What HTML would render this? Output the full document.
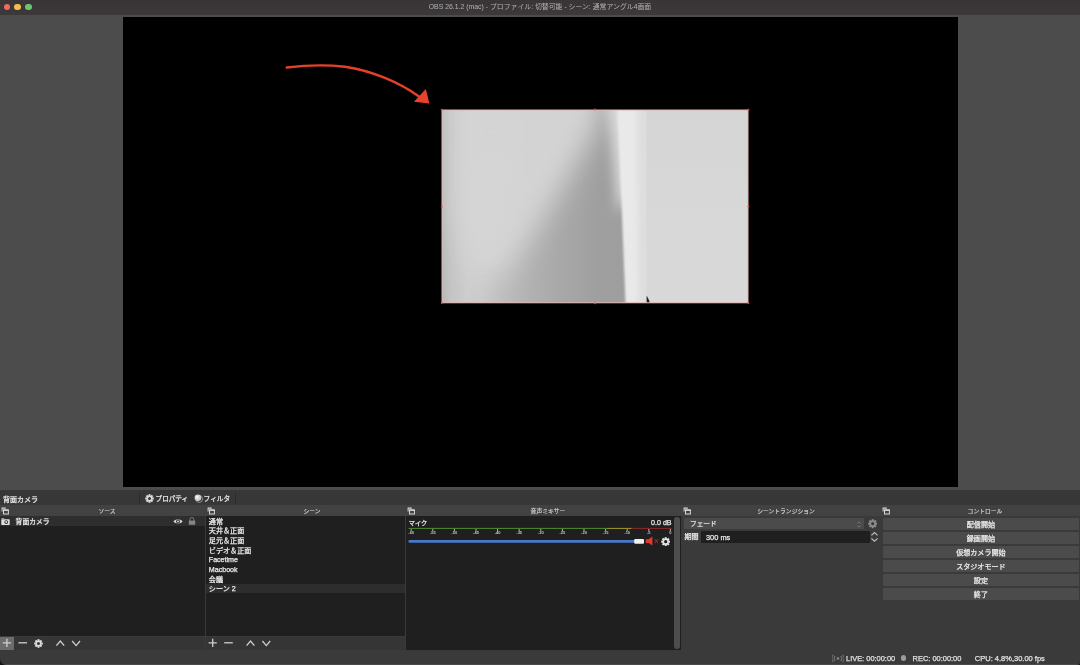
<!DOCTYPE html>
<html lang="ja">
<head>
<meta charset="utf-8">
<title>OBS 26.1.2 (mac)</title>
<style>
*{margin:0;padding:0;box-sizing:border-box}
html,body{width:1080px;height:665px;overflow:hidden;background:#4c4c4c}
body{position:relative;filter:blur(0.4px);font-family:"Liberation Sans","Noto Sans CJK JP",sans-serif;font-size:7px;color:#e6e6e6;line-height:1;-webkit-font-smoothing:antialiased}
.abs{position:absolute}
#titlebar{left:0;top:0;width:1080px;height:14.5px;background:linear-gradient(#393436,#3c393b)}
#title{left:0;width:1080px;top:4.4px;text-align:center;color:#b4b2b3;font-size:6.88px;white-space:nowrap}
.tl{width:6.8px;height:6.8px;border-radius:50%;top:3.6px}
#preview{left:122.5px;top:17px;width:835.3px;height:469.8px;background:#000}
#lower{left:0;top:489.5px;width:1080px;height:175.5px;background:linear-gradient(#373737 0,#373737 15.5px,#3a3a3a 15.5px)}
.hdr{top:505.3px;height:10.7px;background:#424242}
.hdrt{top:508.6px;font-size:5.8px;color:#d4d4d4;-webkit-text-stroke:0.15px #d4d4d4;text-align:center;white-space:nowrap}
.list{background:#1f1f1f}
.tb{background:#353535}
.t{white-space:nowrap;color:#ececec;-webkit-text-stroke:0.25px #ececec}
.sc{left:208.8px;height:9.62px;line-height:9.62px;font-size:7.1px;margin-top:1.5px}
.btn{left:883.2px;width:195.4px;overflow:hidden;height:12.3px;background:#4b4b4b;text-align:center;line-height:14.3px;color:#ececec;font-size:7.05px;-webkit-text-stroke:0.25px #ececec}
</style>
</head>
<body>
<div id="titlebar" class="abs"></div>
<div class="abs tl" style="left:3.5px;background:#ee6a5f"></div>
<div class="abs tl" style="left:14.1px;background:#f5bd4f"></div>
<div class="abs tl" style="left:24.9px;background:#6cc56a"></div>
<div id="title" class="abs">OBS 26.1.2 (mac) - プロファイル: 切替可能 - シーン: 通常アングル4画面</div>

<div id="preview" class="abs"></div>


<!-- source image inside preview -->
<svg class="abs" style="left:0;top:0" width="1080" height="490" viewBox="0 0 1080 490">
  <defs>
    <linearGradient id="gL" x1="0" y1="0" x2="1" y2="0">
      <stop offset="0" stop-color="#b6b6b6"/>
      <stop offset="0.05" stop-color="#c3c3c3"/>
      <stop offset="0.13" stop-color="#cccccc"/>
      <stop offset="0.20" stop-color="#c9c9c9"/>
      <stop offset="0.29" stop-color="#bebebe"/>
      <stop offset="0.43" stop-color="#b1b1b1"/>
      <stop offset="0.57" stop-color="#a8a8a8"/>
      <stop offset="0.76" stop-color="#9f9f9f"/>
      <stop offset="1" stop-color="#9d9d9d"/>
    </linearGradient>
    <linearGradient id="gR" x1="0" y1="0" x2="0" y2="1">
      <stop offset="0" stop-color="#d5d5d5"/>
      <stop offset="1" stop-color="#d9d9d9"/>
    </linearGradient>
    <filter id="bl6" x="-30%" y="-30%" width="160%" height="160%"><feGaussianBlur stdDeviation="6"/></filter>
    <filter id="bl1" x="-30%" y="-30%" width="160%" height="160%"><feGaussianBlur stdDeviation="1.2"/></filter>
    <filter id="bl3" x="-30%" y="-30%" width="160%" height="160%"><feGaussianBlur stdDeviation="3"/></filter>
    <filter id="bl14" x="-40%" y="-40%" width="180%" height="180%"><feGaussianBlur stdDeviation="14"/></filter>
    <filter id="bl10" x="-30%" y="-30%" width="160%" height="160%"><feGaussianBlur stdDeviation="10"/></filter>
    <clipPath id="cpImg"><rect x="442" y="110" width="306" height="193"/></clipPath>
  </defs>
  <g clip-path="url(#cpImg)">
    <rect x="440" y="108" width="210" height="198" fill="url(#gL)"/>
    <!-- light diagonal fold (upper area lighter) -->
    <path d="M452 80 L610 80 L596 130 L552 205 L512 265 L474 290 L452 210 Z" fill="#d5d5d5" filter="url(#bl14)" opacity=".97"/>
    <path d="M466 150 L520 150 L505 230 L470 262 Z" fill="#d5d5d5" filter="url(#bl10)" opacity=".7"/>
    
    <!-- white band -->
    <path d="M606 95 L630 95 L630 190 L618 215 L612 150 Z" fill="#e6e6e6" filter="url(#bl6)" opacity=".8"/>
    <path d="M616.5 95 L650 95 L650 315 L626 315 L622 215 L619 150 Z" fill="#e9e9e9" filter="url(#bl1)"/>
    <path d="M637 100 L650 100 L650 310 L639 310 Z" fill="#dddddd" filter="url(#bl3)"/>
    <rect x="646.4" y="105" width="110" height="205" fill="url(#gR)"/>
    <path d="M646.6 295.4 L646.6 302.8 L649.8 302.8 L649 300 Z" fill="#222"/>
  </g>
  <rect x="442" y="110" width="306" height="192.8" fill="none" stroke="#e2b3b3" stroke-width="1"/>
  <g fill="#d8584a"><circle cx="441.8" cy="109.8" r="1"/><circle cx="595" cy="109.6" r="1"/><circle cx="748.4" cy="109.8" r="1"/><circle cx="441.8" cy="206.5" r="1"/><circle cx="748.4" cy="206.5" r="1"/><circle cx="441.8" cy="303" r="1"/><circle cx="595" cy="303.2" r="1"/><circle cx="748.4" cy="303" r="1"/></g>
  <!-- arrow -->
  <path d="M286.7 67.5 C303 65.5 325 64.5 345 66.7 C372 70.5 400 83 419 96.5" fill="none" stroke="#e5402c" stroke-width="2.4" stroke-linecap="round"/>
  <path d="M425.8 89 L414 101.8 L429.4 103.4 Z" fill="#e9422c"/>
</svg>
<div id="lower" class="abs"></div>

<!-- top strip of lower area -->
<div class="abs t" style="left:2.9px;top:496.2px;font-size:7px">背面カメラ</div>
<div class="abs" style="left:139px;top:492px;width:1px;height:11.5px;background:#2c2c2c"></div>
<div class="abs" style="left:235px;top:492px;width:1px;height:11.5px;background:#2c2c2c"></div>
<svg class="abs" style="left:145px;top:493.6px" width="9" height="9" viewBox="-10 -10 20 20"><g fill="#dcdcdc"><circle r="6.6"/><rect x="-2.2" y="-9.6" width="4.4" height="5" transform="rotate(0)"/><rect x="-2.2" y="-9.6" width="4.4" height="5" transform="rotate(45)"/><rect x="-2.2" y="-9.6" width="4.4" height="5" transform="rotate(90)"/><rect x="-2.2" y="-9.6" width="4.4" height="5" transform="rotate(135)"/><rect x="-2.2" y="-9.6" width="4.4" height="5" transform="rotate(180)"/><rect x="-2.2" y="-9.6" width="4.4" height="5" transform="rotate(225)"/><rect x="-2.2" y="-9.6" width="4.4" height="5" transform="rotate(270)"/><rect x="-2.2" y="-9.6" width="4.4" height="5" transform="rotate(315)"/></g><circle r="3.4" fill="#373737"/></svg>
<div class="abs t" style="left:155.6px;top:496px;font-size:6.6px">プロパティ</div>
<svg class="abs" style="left:193.6px;top:493.8px" width="9" height="9" viewBox="0 0 9 9"><circle cx="5.2" cy="5" r="3.4" fill="none" stroke="#9a9a9a" stroke-width="0.9"/><circle cx="3.9" cy="3.8" r="3.3" fill="#cfcfcf"/><circle cx="3.2" cy="3" r="1.6" fill="#f2f2f2"/></svg>
<div class="abs t" style="left:203.6px;top:496px;font-size:6.7px">フィルタ</div>

<!-- dock headers -->
<div class="abs hdr" style="left:0;width:1080px"></div>
<svg class="abs" style="left:1.2px;top:506.6px" width="8" height="8" viewBox="0 0 8 8"><path d="M0.6 0.6 H4.8 V1.8 H1.6 V4.6 H0.6 Z" fill="#d8d8d8"/><rect x="2.5" y="2.9" width="4.9" height="4.1" fill="none" stroke="#d8d8d8" stroke-width="1"/><rect x="2.5" y="2.6" width="4.9" height="1.3" fill="#d8d8d8"/></svg><svg class="abs" style="left:207px;top:506.6px" width="8" height="8" viewBox="0 0 8 8"><path d="M0.6 0.6 H4.8 V1.8 H1.6 V4.6 H0.6 Z" fill="#d8d8d8"/><rect x="2.5" y="2.9" width="4.9" height="4.1" fill="none" stroke="#d8d8d8" stroke-width="1"/><rect x="2.5" y="2.6" width="4.9" height="1.3" fill="#d8d8d8"/></svg><svg class="abs" style="left:406.8px;top:506.6px" width="8" height="8" viewBox="0 0 8 8"><path d="M0.6 0.6 H4.8 V1.8 H1.6 V4.6 H0.6 Z" fill="#d8d8d8"/><rect x="2.5" y="2.9" width="4.9" height="4.1" fill="none" stroke="#d8d8d8" stroke-width="1"/><rect x="2.5" y="2.6" width="4.9" height="1.3" fill="#d8d8d8"/></svg><svg class="abs" style="left:683px;top:506.6px" width="8" height="8" viewBox="0 0 8 8"><path d="M0.6 0.6 H4.8 V1.8 H1.6 V4.6 H0.6 Z" fill="#d8d8d8"/><rect x="2.5" y="2.9" width="4.9" height="4.1" fill="none" stroke="#d8d8d8" stroke-width="1"/><rect x="2.5" y="2.6" width="4.9" height="1.3" fill="#d8d8d8"/></svg><svg class="abs" style="left:882px;top:506.6px" width="8" height="8" viewBox="0 0 8 8"><path d="M0.6 0.6 H4.8 V1.8 H1.6 V4.6 H0.6 Z" fill="#d8d8d8"/><rect x="2.5" y="2.9" width="4.9" height="4.1" fill="none" stroke="#d8d8d8" stroke-width="1"/><rect x="2.5" y="2.6" width="4.9" height="1.3" fill="#d8d8d8"/></svg>
<div class="abs hdrt" style="left:9px;width:196px">ソース</div>
<div class="abs hdrt" style="left:214px;width:196px">シーン</div>
<div class="abs hdrt" style="left:414px;width:268px">音声ミキサー</div>
<div class="abs hdrt" style="left:691px;width:190px">シーントランジション</div>
<div class="abs hdrt" style="left:890px;width:190px">コントロール</div>

<!-- sources dock -->
<div class="abs list" style="left:0;top:516.3px;width:204.6px;height:120.2px"></div>
<div class="abs" style="left:0;top:516.3px;width:204.6px;height:9.8px;background:#2e2e2e"></div>
<svg class="abs" style="left:1.4px;top:517.6px" width="9" height="7.4" viewBox="0 0 9 7.4"><path d="M0.4 1.2 H3.2 V0.4 H0.4 Z" fill="#e0e0e0"/><rect x="0.3" y="1.3" width="8.4" height="5.6" rx="0.6" fill="#e0e0e0"/><circle cx="5.2" cy="4.1" r="1.9" fill="#2e2e2e"/><circle cx="5.2" cy="4.1" r="1" fill="#e0e0e0"/></svg>
<div class="abs t" style="left:15.6px;top:519px;font-size:6.8px">背面カメラ</div>
<svg class="abs" style="left:172.6px;top:517.6px" width="10" height="7" viewBox="0 0 10 7"><path d="M0.4 3.5 C2 0.9 8 0.9 9.6 3.5 C8 6.1 2 6.1 0.4 3.5 Z" fill="#d6d6d6"/><circle cx="5" cy="3.5" r="1.9" fill="#2e2e2e"/><circle cx="5" cy="3.5" r="1" fill="#d6d6d6"/></svg>
<svg class="abs" style="left:187.6px;top:516.8px" width="8" height="8.4" viewBox="0 0 8 8.4"><path d="M2 4 V2.4 A1.9 1.9 0 0 1 5.8 2.4 V4" fill="none" stroke="#7d7d7d" stroke-width="1"/><rect x="0.8" y="3.6" width="6.4" height="4.2" fill="#858585"/></svg>
<div class="abs tb" style="left:0;top:636.5px;width:204.6px;height:13.7px"></div>
<div class="abs" style="left:0;top:636.5px;width:14px;height:13.7px;background:#6c6c6c"></div>
<svg class="abs" style="left:0;top:636.1px" width="205" height="14" viewBox="0 0 205 14">
 <g stroke="#cfcfcf" stroke-width="1.3" fill="none"><path d="M2.8 6.8 H11 M6.9 2.7 V10.9"/><path d="M18.4 6.8 H27"/><path d="M56.4 9.6 L60.3 5 L64.2 9.6" /><path d="M72.2 5 L76.1 9.6 L80 5"/></g>
</svg>
<svg class="abs" style="left:34.4px;top:638.7px" width="9" height="9" viewBox="-10 -10 20 20"><g fill="#dcdcdc"><circle r="6.6"/><rect x="-2.2" y="-9.6" width="4.4" height="5" transform="rotate(0)"/><rect x="-2.2" y="-9.6" width="4.4" height="5" transform="rotate(45)"/><rect x="-2.2" y="-9.6" width="4.4" height="5" transform="rotate(90)"/><rect x="-2.2" y="-9.6" width="4.4" height="5" transform="rotate(135)"/><rect x="-2.2" y="-9.6" width="4.4" height="5" transform="rotate(180)"/><rect x="-2.2" y="-9.6" width="4.4" height="5" transform="rotate(225)"/><rect x="-2.2" y="-9.6" width="4.4" height="5" transform="rotate(270)"/><rect x="-2.2" y="-9.6" width="4.4" height="5" transform="rotate(315)"/></g><circle r="3.4" fill="#353535"/></svg>

<!-- scenes dock -->
<div class="abs list" style="left:206.2px;top:516.3px;width:198.4px;height:120.2px"></div>
<div class="abs" style="left:206.2px;top:583.6px;width:198.4px;height:9.7px;background:#2d2d2d"></div>
<div class="abs t sc" style="top:516.30px">通常</div>
<div class="abs t sc" style="top:525.92px">天井＆正面</div>
<div class="abs t sc" style="top:535.54px">足元＆正面</div>
<div class="abs t sc" style="top:545.16px">ビデオ＆正面</div>
<div class="abs t sc" style="top:554.78px">Facetime</div>
<div class="abs t sc" style="top:564.40px">Macbook</div>
<div class="abs t sc" style="top:574.02px">会議</div>
<div class="abs t sc" style="top:583.64px">シーン 2</div>

<div class="abs tb" style="left:206.2px;top:636.5px;width:198.4px;height:13.7px"></div>
<svg class="abs" style="left:206px;top:636.1px" width="199" height="14" viewBox="0 0 199 14">
 <g stroke="#cfcfcf" stroke-width="1.3" fill="none"><path d="M2.6 6.8 H10.8 M6.7 2.7 V10.9"/><path d="M18.2 6.8 H26.8"/><path d="M40.6 9.6 L44.5 5 L48.4 9.6" /><path d="M56.4 5 L60.3 9.6 L64.2 5"/></g>
</svg>

<!-- mixer dock -->
<div class="abs list" style="left:405.8px;top:516.3px;width:275.5px;height:133.7px"></div>
<div class="abs" style="left:674.4px;top:517px;width:5.4px;height:131.5px;border-radius:2.7px;background:#4d4d4d"></div>
<div class="abs t" style="left:408.8px;top:519.6px;font-size:6.2px">マイク</div>
<div class="abs t" style="left:620px;width:51.6px;text-align:right;top:519.5px;font-size:7.1px">0.0 dB</div>
<svg class="abs" style="left:405px;top:526px" width="270" height="22" viewBox="0 0 270 22">
  <rect x="3.5" y="1.9" width="198.5" height="1" fill="#4c8a2c"/>
  <rect x="202" y="1.9" width="24.7" height="1" fill="#a59a2a"/>
  <rect x="226.7" y="1.9" width="40" height="1" fill="#8a2a2a"/>
  <g fill="#c4c4c4" font-size="4" font-weight="bold" text-anchor="middle" font-family="Liberation Sans, sans-serif"><path d="M6.2 3 v2.2 M27.8 3 v2.2 M49.4 3 v2.2 M71.0 3 v2.2 M92.6 3 v2.2 M114.2 3 v2.2 M135.8 3 v2.2 M157.4 3 v2.2 M179.0 3 v2.2 M200.6 3 v2.2 M222.2 3 v2.2 M243.8 3 v2.2 M265.4 3 v2.2" stroke="#c4c4c4" stroke-width="0.9"/><text x="6.2" y="8.2">-60</text><text x="27.8" y="8.2">-55</text><text x="49.4" y="8.2">-50</text><text x="71.0" y="8.2">-45</text><text x="92.6" y="8.2">-40</text><text x="114.2" y="8.2">-35</text><text x="135.8" y="8.2">-30</text><text x="157.4" y="8.2">-25</text><text x="179.0" y="8.2">-20</text><text x="200.6" y="8.2">-15</text><text x="222.2" y="8.2">-10</text><text x="243.8" y="8.2">-5</text><text x="265.4" y="8.2">0</text></g>
  <rect x="3.4" y="14.1" width="228" height="2.6" rx="1.3" fill="#4a78c8"/>
  <rect x="229.2" y="13" width="9.8" height="4.8" rx="1" fill="#efefef"/>
  <path d="M240.8 13.2 H243.6 L247.4 10.6 V19.6 L243.6 17 H240.8 Z" fill="#e03a2e"/>
  <path d="M249.8 13.2 L253 17 M253 13.2 L249.8 17" stroke="#c8301f" stroke-width="0.9"/>
</svg>
<svg class="abs" style="left:660.9px;top:536.9px" width="9.4" height="9.4" viewBox="-10 -10 20 20"><g fill="#e4e4e4"><circle r="6.6"/><rect x="-2.2" y="-9.6" width="4.4" height="5" transform="rotate(0)"/><rect x="-2.2" y="-9.6" width="4.4" height="5" transform="rotate(45)"/><rect x="-2.2" y="-9.6" width="4.4" height="5" transform="rotate(90)"/><rect x="-2.2" y="-9.6" width="4.4" height="5" transform="rotate(135)"/><rect x="-2.2" y="-9.6" width="4.4" height="5" transform="rotate(180)"/><rect x="-2.2" y="-9.6" width="4.4" height="5" transform="rotate(225)"/><rect x="-2.2" y="-9.6" width="4.4" height="5" transform="rotate(270)"/><rect x="-2.2" y="-9.6" width="4.4" height="5" transform="rotate(315)"/></g><circle r="3.4" fill="#1f1f1f"/></svg>

<!-- transitions dock -->
<div class="abs" style="left:684px;top:517.8px;width:180px;height:11.7px;background:#4b4b4b"></div>
<div class="abs t" style="left:690px;top:521.2px;font-size:6.7px;color:#d0d0d0">フェード</div>
<svg class="abs" style="left:856px;top:519.6px" width="6" height="9" viewBox="0 0 6 9"><path d="M1.6 3.4 L3 1.8 L4.4 3.4 M1.6 5.6 L3 7.2 L4.4 5.6" fill="none" stroke="#7c7c7c" stroke-width="0.9"/></svg>
<svg class="abs" style="left:867.8px;top:519.2px" width="9.4" height="9.4" viewBox="-10 -10 20 20"><g fill="#8e8e8e"><circle r="6.6"/><rect x="-2.2" y="-9.6" width="4.4" height="5" transform="rotate(0)"/><rect x="-2.2" y="-9.6" width="4.4" height="5" transform="rotate(45)"/><rect x="-2.2" y="-9.6" width="4.4" height="5" transform="rotate(90)"/><rect x="-2.2" y="-9.6" width="4.4" height="5" transform="rotate(135)"/><rect x="-2.2" y="-9.6" width="4.4" height="5" transform="rotate(180)"/><rect x="-2.2" y="-9.6" width="4.4" height="5" transform="rotate(225)"/><rect x="-2.2" y="-9.6" width="4.4" height="5" transform="rotate(270)"/><rect x="-2.2" y="-9.6" width="4.4" height="5" transform="rotate(315)"/></g><circle r="3.4" fill="#3a3a3a"/></svg>
<div class="abs t" style="left:684.4px;top:533.8px;font-size:7.1px">期間</div>
<div class="abs list" style="left:701px;top:530.6px;width:168.5px;height:12.2px"></div>
<div class="abs t" style="left:706px;top:533.6px;font-size:7.4px">300 ms</div>
<svg class="abs" style="left:870px;top:531px" width="9" height="12" viewBox="0 0 9 12"><path d="M1.4 4.4 L4.5 1.6 L7.6 4.4 M1.4 7.4 L4.5 10.2 L7.6 7.4" fill="none" stroke="#bdbdbd" stroke-width="1.2"/></svg>

<!-- controls dock -->
<div class="abs btn" style="top:517.9px">配信開始</div>
<div class="abs btn" style="top:532.1px">録画開始</div>
<div class="abs btn" style="top:546.1px">仮想カメラ開始</div>
<div class="abs btn" style="top:560px">スタジオモード</div>
<div class="abs btn" style="top:573.9px">設定</div>
<div class="abs btn" style="top:587.8px">終了</div>

<!-- status bar -->
<svg class="abs" style="left:832px;top:653.5px" width="12" height="9" viewBox="0 0 12 9"><g fill="none" stroke="#8a8a8a" stroke-width="0.9"><path d="M3.2 2 A3.6 3.6 0 0 0 3.2 7 M8.8 2 A3.6 3.6 0 0 1 8.8 7 M1.4 0.8 A5.6 5.6 0 0 0 1.4 8.2 M10.6 0.8 A5.6 5.6 0 0 1 10.6 8.2"/></g><circle cx="6" cy="4.5" r="1.3" fill="#8a8a8a"/></svg>
<div class="abs t" style="left:846px;top:655.2px;font-size:7.45px;color:#d8d8d8">LIVE: 00:00:00</div>
<div class="abs" style="left:901.2px;top:655.4px;width:5.2px;height:5.2px;border-radius:50%;background:#9c9c9c"></div>
<div class="abs t" style="left:912.6px;top:655.2px;font-size:7.45px;color:#d8d8d8">REC: 00:00:00</div>
<div class="abs t" style="left:974.8px;top:655.2px;font-size:7.5px;color:#d8d8d8">CPU: 4.8%,30.00 fps</div>
<div class="abs" style="left:0;top:664px;width:1080px;height:1px;background:#4a4a4a"></div>
<svg class="abs" style="left:0;top:659px" width="6" height="6" viewBox="0 0 6 6"><path d="M0 0 A6 6 0 0 0 6 6 H0 Z" fill="#161414"/></svg>
<svg class="abs" style="left:1077px;top:662px" width="3" height="3" viewBox="0 0 3 3"><path d="M3 0 A3 3 0 0 1 0 3 H3 Z" fill="#161414"/></svg>

</body>
</html>
